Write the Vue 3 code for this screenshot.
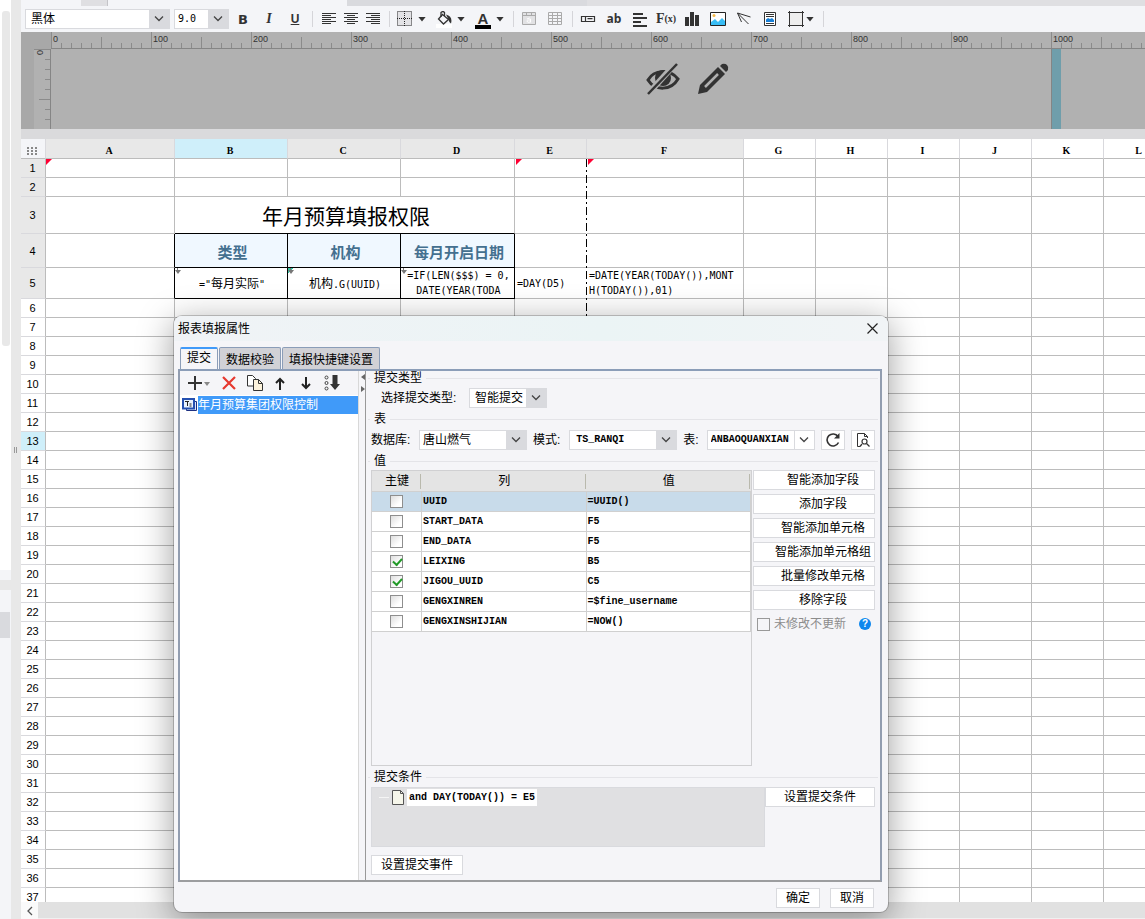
<script setup>
import { ref } from 'vue'

const font = ref('黑体')
const size = ref('9.0')
const submitType = ref('智能提交')
const database = ref('唐山燃气')
const schema = ref('TS_RANQI')
const tableName = ref('ANBAOQUANXIAN')
const keepUnmodified = ref(false)

const hTicks = Array.from({ length: 110 }, (_, i) => i)
const vTicks = Array.from({ length: 8 }, (_, i) => i)
const tickTop = (i) => (i % 10 === 0 ? 0 : i % 5 === 0 ? 5 : 11)

const columns = ['A', 'B', 'C', 'D', 'E', 'F', 'G', 'H', 'I', 'J', 'K', 'L']
const lastRows = Array.from({ length: 32 }, (_, i) => i + 6)

const fields = ref([
  { key: false, name: 'UUID', value: '=UUID()' },
  { key: false, name: 'START_DATA', value: 'F5' },
  { key: false, name: 'END_DATA', value: 'F5' },
  { key: true, name: 'LEIXING', value: 'B5' },
  { key: true, name: 'JIGOU_UUID', value: 'C5' },
  { key: false, name: 'GENGXINREN', value: '=$fine_username' },
  { key: false, name: 'GENGXINSHIJIAN', value: '=NOW()' },
])
const actions = ['智能添加字段', '添加字段', '智能添加单元格', '智能添加单元格组', '批量修改单元格', '移除字段']
</script>

<template>
  <div class="app">
    <aside class="side">
      <div class="side-list"><div class="side-thumb"></div></div>
      <div class="side-foot"></div>
      <div class="side-split"></div>
      <div class="side-gap"></div>
      <div class="side-item"></div>
      <div class="side-rest"></div>
    </aside>
    <div class="gutter"><i></i><i></i></div>

    <main class="main">
      <div class="topstrip"><span class="t1"></span><span class="t2"></span><span class="t3"></span><span class="t4"></span><span class="t5"></span></div>

      <div class="toolbar">
        <label class="combo font-combo">
          <select v-model="font" aria-label="字体"><option>黑体</option></select>
          <span class="arrow"><svg width="10" height="6" viewBox="0 0 10 6"><path d="M1 .5 5 4.5 9 .5" /></svg></span>
        </label>
        <label class="combo size-combo">
          <select v-model="size" aria-label="字号" class="mono"><option>9.0</option></select>
          <span class="arrow"><svg width="10" height="6" viewBox="0 0 10 6"><path d="M1 .5 5 4.5 9 .5" /></svg></span>
        </label>
        <div class="group">
          <button class="ic b">B</button>
          <button class="ic i">I</button>
          <button class="ic u">U</button>
        </div>
        <span class="sep"></span>
        <div class="group tight">
          <button class="ic" aria-label="左对齐"><svg width="16" height="14"><path class="ln" d="M2 1.500h14M2 3.500h9M2 5.500h14M2 7.500h9M2 9.500h14M2 11.500h9" /></svg></button>
          <button class="ic" aria-label="居中"><svg width="16" height="14"><path class="ln" d="M2 1.500h14M5 3.500h8M2 5.500h14M5 7.500h8M2 9.500h14M5 11.500h8" /></svg></button>
          <button class="ic" aria-label="右对齐"><svg width="16" height="14"><path class="ln" d="M2 1.500h14M7 3.500h9M2 5.500h14M7 7.500h9M2 9.500h14M7 11.500h9" /></svg></button>
        </div>
        <span class="sep"></span>
        <div class="group">
          <div class="drop">
            <button class="ic" aria-label="边框"><svg width="16" height="16"><path d="M.5.5h14v14H.5z" fill="#e3e3e6" stroke="#222" stroke-dasharray="1 1" /><path d="M7.500 0v15M0 7.500h15" stroke="#222" stroke-dasharray="1 1" /></svg></button>
            <button class="car" aria-label="更多边框"></button>
          </div>
          <div class="drop">
            <button class="ic" aria-label="填充"><svg width="17" height="17"><path fill="#fff" d="M0 13h17v4H0z" /><path d="m6.500 3.500 6 5-5 4.500-5-5z" fill="none" stroke="#333" stroke-width="1.300" /><path d="M5 6V1.500q2-2 3.500 0V5" fill="none" stroke="#333" stroke-width="1.300" /><path d="M10 3.500q7 2 5 9-2-1-2.500-4z" fill="#333" /></svg></button>
            <button class="car" aria-label="更多填充"></button>
          </div>
          <div class="drop">
            <button class="ic fc" aria-label="字体颜色"><span>A</span></button>
            <button class="car" aria-label="更多颜色"></button>
          </div>
        </div>
        <span class="sep"></span>
        <div class="group">
          <button class="ic" aria-label="合并"><svg width="16" height="14"><path d="M1.500.500h13v12h-13zM1 3.500h14M5.500 0v3M10.500 0v3" fill="#e2e2e4" stroke="#aaa" /><path d="M6 7q3-2 3.500 0v3.500M9.500 8q-4-.5-3.500 1.500 2 2 3.500 0" fill="none" stroke="#fff" /></svg></button>
          <button class="ic" aria-label="表格"><svg width="16" height="14"><path d="M1.500.500h13v12h-13zM1 3.500h14M1 6.500h14M1 9.500h14M5.500 0v13M10.500 0v13" fill="none" stroke="#aaa" /></svg></button>
        </div>
        <span class="sep"></span>
        <div class="group">
          <button class="ic" aria-label="控件"><svg width="16" height="8"><path d="M1.500 1.500h13v5h-13zM5.500 1v5M7.500 3.700h5" fill="none" stroke="#333" stroke-width="1.200" /></svg></button>
          <button class="ic ab">ab</button>
          <button class="ic" aria-label="段落"><svg width="16" height="15"><path d="M1 2h10M1 6h14M1 10h8M1 14h14" stroke="#333" stroke-width="2" /></svg></button>
          <button class="ic fx">F<small>(x)</small></button>
          <button class="ic" aria-label="图表"><svg width="16" height="14"><path d="M1 5h4v9H1zM6 0h4v14H6zM11 3h4v11h-4z" fill="#333" /></svg></button>
          <button class="ic" aria-label="图片"><svg width="16" height="14"><path d="M.5.500h15v13H.500z" fill="#fff" stroke="#222" /><path d="M1 13V10l4-3 3 3 4-4 3 3v4z" fill="#38bdf5" /><circle cx="4" cy="3.500" r="1.500" fill="#f5b947" /></svg></button>
          <button class="ic" aria-label="斜线"><svg width="16" height="14"><path d="m1.500 1 13 4M1.500 1l4 9M1.500 1l11 11" fill="none" stroke="#333" /></svg></button>
          <button class="ic" aria-label="子报表"><svg width="14" height="14"><path d="M1.500.500h11v13h-11z" fill="#fff" stroke="#333" /><path d="M3 2.500h8M3 4.500h8M3 11.500h8" stroke="#333" /><path d="M3 10V7.500l2-1.500 2 1 2-1 2 2v2z" fill="#187fd6" /></svg></button>
          <div class="drop near">
            <button class="ic" aria-label="形状"><svg width="16" height="16"><path d="M2 2h12v12H2z" fill="#eee" /><path d="M0 1.500h16M0 14.500h16M1.500 0v16M14.500 0v16" stroke="#333" /></svg></button>
            <button class="car" aria-label="更多形状"></button>
          </div>
        </div>
        <span class="sep"></span>
      </div>

      <div class="ruler">
        <div class="corner"></div>
        <svg class="hr" height="17">
          <g v-for="i in hTicks" :key="i">
            <path :d="`M${i * 10 + 0.5} ${tickTop(i)}V16`" stroke="#8b8b8b" />
            <text v-if="i % 10 === 0" :x="i * 10 + 2" y="10">{{ i * 10 }}</text>
          </g>
          <path d="M0 16.500H1600" stroke="#858585" />
        </svg>
        <svg class="vr" width="30" height="80">
          <path d="M0 0H13V80H0z" fill="#a8a8a8" />
          <path v-for="i in vTicks" :key="i" :d="`M${i === 0 ? 13 : i === 5 ? 18 : 24} ${i * 10 + 0.5}H29`" stroke="#8b8b8b" />
          <path d="M29.500 0V80" stroke="#858585" />
          <text x="-6" y="22" transform="rotate(-90)">0</text>
        </svg>
        <div class="page">
          <div class="page-in"></div>
          <div class="page-edge"></div>
          <div class="tools">
            <button aria-label="隐藏"><svg width="34" height="32" viewBox="0 0 34 32"><path d="M2 17C8 6 24 6 32 16C25 28 9 28 2 17z" fill="none" stroke="#333" stroke-width="3" /><circle cx="17" cy="15" r="8" fill="#333" /><path d="M29 1 2 31" stroke="#b1b1b1" stroke-width="6" /><path d="M31 1 2 31" stroke="#333" stroke-width="2.500" /></svg></button>
            <button aria-label="编辑"><svg width="32" height="32" viewBox="0 0 32 32"><path d="M1 31 3 22 21 4l7 7L10 29z" fill="#333" /><path d="M8 24 21 11" stroke="#b1b1b1" stroke-width="2.500" /><path d="m23 3 2-2q3-1 5 1t1 5l-2 2z" fill="#333" /></svg></button>
          </div>
        </div>
      </div>
      <div class="band"></div>

      <div class="sheet">
        <table class="grid">
          <colgroup>
            <col class="c0" /><col class="ca" /><col class="cb" /><col class="cb" /><col class="cd" /><col class="cs" /><col class="cf" />
            <col v-for="n in 6" :key="n" class="cs" />
          </colgroup>
          <thead>
            <tr class="h20">
              <th class="all"><svg width="10" height="8"><path d="M0 1h10M0 4h10M0 7h10" stroke="#888" stroke-width="2" stroke-dasharray="2 2" /></svg></th>
              <th v-for="(c, i) in columns" :key="c" :class="{ on: c === 'B', used: i < 6 }">{{ c }}</th>
            </tr>
          </thead>
          <tbody>
            <tr class="h19"><th class="used">1</th><td class="flag"></td><td></td><td></td><td></td><td class="flag in"></td><td class="flag in"></td><td v-for="n in 6" :key="n"></td></tr>
            <tr class="h19"><th class="used">2</th><td v-for="n in 12" :key="n"></td></tr>
            <tr class="h37"><th class="used">3</th><td></td><td colspan="3" class="title bb">年月预算填报权限</td><td v-for="n in 8" :key="n"></td></tr>
            <tr class="h34"><th class="used">4</th><td class="br"></td><td class="hd">类型</td><td class="hd">机构</td><td class="hd">每月开启日期</td><td v-for="n in 8" :key="n"></td></tr>
            <tr class="h31">
              <th class="used">5</th><td class="br"></td>
              <td class="bb br arr"><span class="mono">="</span>每月实际<span class="mono">"</span></td>
              <td class="bb br arr gr">机构<span class="mono">.G(UUID)</span></td>
              <td class="bb br arr mono two">=IF(LEN($$$) = 0,<br />DATE(YEAR(TODA</td>
              <td class="mono lt">=DAY(D5)</td>
              <td class="mono lt">=DATE(YEAR(TODAY()),MONT<br />H(TODAY()),01)</td>
              <td v-for="n in 6" :key="n"></td>
            </tr>
            <tr v-for="r in lastRows" :key="r" class="h19"><th :class="{ on: r === 13 }">{{ r }}</th><td v-for="n in 12" :key="n"></td></tr>
          </tbody>
        </table>
        <div class="pagebreak"></div>
      </div>
      <div class="hscroll"><button aria-label="向左滚动"><svg width="6" height="10"><path d="M5 1 1 5l4 4" fill="none" stroke="#555" stroke-width="1.300" /></svg></button><span></span></div>
    </main>

    <section class="dialog" role="dialog" aria-label="报表填报属性">
      <header>
        <h1>报表填报属性</h1>
        <button aria-label="关闭"><svg width="11" height="11"><path d="m.5.500 10 10M10.500.500l-10 10" stroke="#222" stroke-width="1.200" /></svg></button>
      </header>
      <nav><button class="active">提交</button><button>数据校验</button><button>填报快捷键设置</button></nav>

      <div class="panel">
        <div class="left">
          <div class="ltools">
            <button aria-label="添加"><svg width="22" height="14"><path d="M0 7h14M7 0v14" stroke="#333" stroke-width="2" /><path d="M16 6h6l-3 4z" fill="#888" /></svg></button>
            <button aria-label="删除"><svg width="14" height="14"><path d="m1 1 12 12M13 1 1 13" stroke="#e6392f" stroke-width="2.200" /></svg></button>
            <button aria-label="复制"><svg width="16" height="16"><path d="M.5.500h5l3 3v7.500h-8z" fill="#fff" stroke="#333" /><path d="M6.500 4.500h5l4 4v7h-9z" fill="#fdf3dc" stroke="#333" /><path d="M11.500 4.500v4h4" fill="none" stroke="#333" /></svg></button>
            <button aria-label="上移"><svg width="10" height="13"><path d="M5 13V2M1 6l4-4 4 4" fill="none" stroke="#222" stroke-width="2" /></svg></button>
            <button aria-label="下移"><svg width="10" height="13"><path d="M5 0v11M1 7l4 4 4-4" fill="none" stroke="#222" stroke-width="2" /></svg></button>
            <button aria-label="排序"><svg width="16" height="16"><g fill="none" stroke="#444"><circle cx="2.500" cy="2.500" r="1.500" /><circle cx="2.500" cy="8" r="1.500" /><circle cx="2.500" cy="13.500" r="1.500" /></g><path d="M8.500 0h5v9H16l-5 6-5-6h2.500z" fill="#333" /></svg></button>
          </div>
          <div class="list">
            <div class="item">
              <svg width="16" height="14"><path d="M4.500 3.500h10v9h-10z" fill="#dce8f8" stroke="#1d2f80" /><path d="M1 1h11v9.500H1z" fill="#e8f2ff" stroke="#2450b0" stroke-width="2" /><path d="M3 3.500h4M5.500 4v4M7.500 6h2M7.500 8h2" stroke="#222" /></svg>
              <span>年月预算集团权限控制</span>
            </div>
          </div>
        </div>
        <div class="splitter"><svg width="4" height="18"><path d="M4 0v6L0 3zM0 12v6l4-3z" fill="#666" /></svg></div>

        <div class="right">
          <h2 class="first">提交类型</h2>
          <div class="row type">
            <label for="st">选择提交类型:</label>
            <span class="combo type-combo">
              <select id="st" v-model="submitType"><option>智能提交</option></select>
              <span class="arrow"><svg width="10" height="6" viewBox="0 0 10 6"><path d="M1 .5 5 4.5 9 .5" /></svg></span>
            </span>
          </div>
          <h2>表</h2>
          <div class="row db">
            <label for="db">数据库:</label>
            <span class="combo db-combo">
              <select id="db" v-model="database"><option>唐山燃气</option></select>
              <span class="arrow"><svg width="10" height="6" viewBox="0 0 10 6"><path d="M1 .5 5 4.5 9 .5" /></svg></span>
            </span>
            <label for="sc">模式:</label>
            <span class="combo db-combo sch">
              <select id="sc" v-model="schema" class="mono ser"><option>TS_RANQI</option></select>
              <span class="arrow"><svg width="10" height="6" viewBox="0 0 10 6"><path d="M1 .5 5 4.5 9 .5" /></svg></span>
            </span>
            <label for="tb">表:</label>
            <span class="combo db-combo plain">
              <input id="tb" v-model="tableName" class="mono ser" type="text" />
              <span class="arrow"><svg width="10" height="6" viewBox="0 0 10 6"><path d="M1 .5 5 4.5 9 .5" /></svg></span>
            </span>
            <button class="btn sq" aria-label="刷新"><svg width="14" height="14"><path d="M12 3.500A6 6 0 1 0 12.500 9.500" fill="none" stroke="#333" stroke-width="1.600" /><path d="M13.500 0v5.500H8z" fill="#333" /></svg></button>
            <button class="btn sq" aria-label="预览"><svg width="14" height="14"><path d="M4 13.500H1.500V.500h7l3 3V5M8.500.500v3h3" fill="none" stroke="#333" /><circle cx="8.500" cy="8.500" r="2.500" fill="none" stroke="#333" stroke-width="1.200" /><path d="m10.500 10.500 3 3M6 11l-2 2.500" stroke="#333" stroke-width="1.300" /></svg></button>
          </div>
          <h2 class="val">值</h2>
          <div class="values">
            <div class="vbox">
              <table class="vt">
                <colgroup><col class="k" /><col /><col /></colgroup>
                <thead><tr><th>主键</th><th>列</th><th>值</th></tr></thead>
                <tbody>
                  <tr v-for="(f, i) in fields" :key="f.name" :class="{ sel: i === 0 }">
                    <td class="kc"><input v-model="f.key" type="checkbox" :aria-label="f.name" /></td>
                    <td class="mono ser">{{ f.name }}</td>
                    <td class="mono ser">{{ f.value }}</td>
                  </tr>
                </tbody>
              </table>
            </div>
            <div class="acts">
              <button v-for="a in actions" :key="a" class="btn">{{ a }}</button>
              <div class="keep">
                <label><input v-model="keepUnmodified" type="checkbox" /><span>未修改不更新</span></label>
                <button class="help" aria-label="帮助">?</button>
              </div>
            </div>
          </div>
          <h2 class="cond">提交条件</h2>
          <div class="condrow">
            <div class="tree">
              <i></i>
              <svg width="12" height="15"><path d="M.500.500h8l3 3v11H.500z" fill="#f6f6ea" stroke="#555" /><path d="M8.500.500v3h3" fill="none" stroke="#555" /></svg>
              <span class="mono ser">and DAY(TODAY()) = E5</span>
            </div>
            <button class="btn">设置提交条件</button>
          </div>
          <button class="btn event">设置提交事件</button>
        </div>
      </div>
      <footer><button class="btn">确定</button><button class="btn">取消</button></footer>
    </section>
  </div>
</template>

<style>
html, body { height: 100%; margin: 0; overflow: hidden; }
</style>

<style scoped>
.app { position: relative; display: flex; height: 100vh; overflow: hidden; background: #f4f5f8; color: #000; font: 12px/14px "Liberation Sans", "Noto Sans CJK SC", sans-serif; }
.app * { box-sizing: border-box; }
button, select, input { font: inherit; color: inherit; margin: 0; padding: 0; }
button { border: 0; background: none; }
svg { display: block; }
.mono { font-family: "DejaVu Sans Mono", "Noto Sans CJK SC", monospace; font-size: 10px; }
.ser { font-family: "Liberation Mono", "Noto Sans CJK SC", monospace; font-weight: bold; }

.side { flex: none; width: 11px; display: flex; flex-direction: column; }
.side-list { height: 570px; background: #fff; padding: 11px 1px 0 2px; }
.side-thumb { height: 335px; background: #e8e8e8; border-radius: 3px; }
.side-foot { height: 10px; background: #f4f5f8; }
.side-split { height: 10px; background: #e8e8e8; }
.side-gap { height: 22px; }
.side-item { height: 26px; margin-right: 1px; background: #d9dade; }
.side-rest { flex: 1; }
.gutter { flex: none; width: 10px; display: flex; gap: 1px; padding: 447px 0 0 3px; background: #e8e8e8; }
.gutter i { width: 1px; height: 6px; background: #999; }

.main { flex: 1; min-width: 0; display: flex; flex-direction: column; }
.topstrip { flex: none; display: flex; height: 6px; }
.t1 { width: 60px; }
.t2 { width: 27px; background: #dfdfe2; border-right: 1px solid #c4c4c8; }
.t3 { width: 239px; }
.t4 { width: 240px; background: #d9dade; }
.t5 { flex: 1; background: #dfdfe2; }
.toolbar { flex: none; display: flex; align-items: center; height: 26px; padding-left: 4px; }
.combo { display: inline-grid; grid-template-columns: 1fr 20px; height: 20px; border: 1px solid #d9dade; background: #fff; }
.combo select, .combo input { grid-area: 1 / 1 / 2 / 3; width: 100%; min-width: 0; height: 18px; border: 0; outline: 0; background: transparent; appearance: none; padding-left: 5px; line-height: 18px; }
.combo input { grid-area: 1 / 1 / 2 / 2; }
.arrow { grid-area: 1 / 2 / 2 / 3; display: flex; align-items: center; justify-content: center; background: #d9dade; pointer-events: none; }
.arrow path { fill: none; stroke: #444; stroke-width: 1.3; }
.combo.plain .arrow { background: #fff; border-left: 1px solid #d9dade; }
.font-combo { width: 145px; margin-right: 4px; }
.size-combo { width: 55px; margin-right: 6px; }
.size-combo select { padding-left: 3px; }
.group { display: flex; align-items: center; gap: 10px; }
.group.tight { gap: 6px; }
.drop { display: flex; align-items: center; gap: 5px; }
.drop.near { gap: 2px; }
.ic { display: flex; align-items: center; justify-content: center; width: 16px; height: 20px; color: #333; }
.ic.b { font: bold 13px "DejaVu Sans", sans-serif; }
.ic.i { font: italic bold 14px "Liberation Serif", serif; }
.ic.u { font-weight: bold; text-decoration: underline; }
.ic.fc { align-items: flex-end; }
.ic.fc span { border-bottom: 4px solid #000; width: 16px; font: bold 15px/13px "Liberation Sans", sans-serif; }
.ic.ab { font: bold 12px/16px "Open Sans", sans-serif; }
.ic.fx { font: bold 14px/16px "Liberation Serif", serif; }
.ic.fx small { font-size: 10px; }
.ln { stroke: #333; }
.car { width: 8px; height: 5px; background: #333; clip-path: polygon(0 0, 100% 0, 50% 100%); }
.sep { flex: none; width: 1px; height: 16px; margin: 0 7px 0 9px; background: #d5d5d9; }

.ruler { flex: none; display: grid; grid-template-columns: 30px minmax(0, 1fr); grid-template-rows: 17px 80px; background: #b1b1b1; overflow: hidden; }
.corner { background: #a8a8a8; }
.hr { width: 100%; }
.ruler text { font: 9px "Liberation Sans", sans-serif; fill: #333; }
.page { position: relative; display: flex; }
.page-in { width: 1001px; border-right: 1px solid #858585; }
.page-edge { width: 9px; background: #6f9eab; }
.tools { position: absolute; top: 14px; left: 595px; display: flex; gap: 17px; }
.band { flex: none; height: 10px; background: #dadadc; }

.sheet { position: relative; flex: 1; min-height: 0; overflow: hidden; background: #fff; }
.grid { table-layout: fixed; width: 1155px; border-collapse: separate; border-spacing: 0; }
.c0 { width: 25px; } .ca { width: 129px; } .cb { width: 113px; } .cd { width: 114px; } .cs { width: 72px; } .cf { width: 157px; }
.grid th, .grid td { padding: 0; border-right: 1px solid #bcbcbc; border-bottom: 1px solid #bcbcbc; text-align: center; vertical-align: middle; overflow: hidden; white-space: nowrap; }
.grid thead th { font: bold 10px/14px "Liberation Serif", serif; border-right-color: #d9d9dd; padding: 4px 2px 0 0; }
.grid tbody th { font: 11px/14px "Liberation Sans", sans-serif; border-bottom-color: #d9d9dd; padding: 0 1px 0 0; }
.grid th.used { background: #e8e8e8; }
.grid th.on { background: #cfeffa; }
.grid th.all { background: #f4f5f8; }
.grid th.all svg { margin: 0 6px; }
.h20 { height: 20px; } .h19 { height: 19px; } .h37 { height: 37px; } .h34 { height: 34px; } .h31 { height: 31px; }
.grid .br { border-right-color: #000; }
.grid .bb { border-bottom-color: #000; }
.grid .title { font-size: 21px; line-height: 30px; padding: 3px 0 0 3px; }
.grid .hd { background: #f0f8ff; border-color: #000; color: #44708f; font-size: 15px; font-weight: bold; line-height: 20px; padding: 4px 0 0 3px; }
.grid .bb.arr { padding: 2px 0 0 2px; }
.grid .bb.arr.two { padding: 0 0 0 2px; }
.grid td.mono { line-height: 15px; }
.grid .lt { text-align: left; padding: 0 0 0 2px; }
.flag, .arr { position: relative; }
.flag::before { content: ""; position: absolute; left: 0; top: 0; border-top: 6px solid #ff0033; border-right: 6px solid transparent; }
.flag.in::before { left: 1px; }
.arr::before { content: ""; position: absolute; left: 0; top: 2px; border-top: 4px solid #777; border-left: 3px solid transparent; border-right: 3px solid transparent; }
.arr::after { content: ""; position: absolute; left: 2px; top: 0; width: 1px; height: 4px; background: #777; }
.gr { background: linear-gradient(135deg, #34c3a0 4px, transparent 4px); }
.pagebreak { position: absolute; left: 565px; top: 20px; bottom: 0; width: 1px; background: repeating-linear-gradient(#000 0 8px, #fff 8px 11px, #000 11px 13px, #fff 13px 16px); }
.hscroll { flex: none; display: flex; height: 17px; background: #f0f0f0; }
.hscroll button { width: 17px; display: flex; align-items: center; justify-content: center; background: #fafafa; }
.hscroll span { flex: 1; height: 16px; background: #e1e1e1; }

.dialog { position: absolute; left: 174px; top: 316px; width: 714px; display: flex; flex-direction: column; background: #f5f5f8; border-radius: 8px; box-shadow: 0 0 0 1px rgba(0, 0, 0, .2), 0 8px 34px 2px rgba(0, 0, 0, .36); }
.dialog header { display: flex; justify-content: space-between; align-items: center; height: 25px; padding: 0 10px 0 4px; background: linear-gradient(90deg, #f0f3f6, #ebf4f5 60%, #f1f4f6); border-radius: 8px 8px 0 0; }
h1, h2 { margin: 0; font: inherit; }
nav { display: flex; gap: 1px; align-items: flex-end; height: 28px; padding-left: 6px; }
nav button { height: 22px; padding: 2px 6px 0; border: 1px solid #8b9db8; border-bottom: 0; border-radius: 2px 2px 0 0; background: #d1d1d6; }
nav .active { padding-bottom: 3px; padding-top: 0; border-top: 2px solid #409af9; background: #f5f5f8; }
.panel { display: flex; margin: 0 6px 0 4px; border: 2px solid #929db0; border-top-color: #8b9db8; border-bottom-color: #9c9d9f; }
.left { flex: none; width: 179px; display: flex; flex-direction: column; border-right: 1px solid #d8d8d8; }
.ltools { display: flex; align-items: center; height: 24px; padding-left: 8px; }
.ltools button { margin-right: 12px; }
.ltools button:nth-child(2) { margin-right: 11px; }
.ltools button:nth-child(4) { margin-right: 16px; }
.ltools button:nth-child(5) { margin-right: 13px; }
.list { flex: 1; background: #fff; }
.item { display: flex; align-items: center; height: 20px; padding-left: 2px; }
.item span { flex: 1; height: 18px; line-height: 18px; background: #409af9; color: #fff; }
.splitter { flex: none; width: 7px; padding: 3px 0 0 2px; border-right: 1px solid #999; }
.right { flex: 1; min-width: 0; display: flex; flex-direction: column; align-items: stretch; padding: 0 2px 5px 2px; height: 509px; }
h2 { display: flex; align-items: center; gap: 4px; height: 14px; margin: 4px 0; white-space: nowrap; }
h2::before { content: ""; width: 2px; height: 1px; background: #e4e4e8; }
h2::after { content: ""; flex: 1; height: 1px; background: #e4e4e8; }
h2.first { margin: 0 0 3px; }
h2.val { margin: 4px 0 2px; }
.row { display: flex; align-items: center; height: 20px; white-space: nowrap; }
.type { padding-left: 13px; }
.type label { width: 88px; }
.type-combo { width: 78px; }
.db { padding-left: 3px; }
.db label:first-child { width: 48px; }
.db-combo { width: 108px; margin-right: 6px; }
.db-combo select { padding-left: 3px; }
.db-combo select.mono { padding-left: 6px; }
.db-combo input { padding-left: 3px; }
.sch { margin-left: 9px; }
.plain { margin-left: 8px; }
.btn { height: 20px; border: 1px solid #d9dade; background: #fff; white-space: nowrap; line-height: 18px; }
.sq { width: 24px; display: flex; align-items: center; justify-content: center; }
.sq + .sq { margin-left: 6px; }
.values { flex: 1; min-height: 0; display: flex; margin: 0 3px; }
.vbox { flex: 1; border: 1px solid #d0d0d2; }
.vt { width: 100%; table-layout: fixed; border-collapse: separate; border-spacing: 0; background: #fff; }
.vt .k { width: 50px; }
.vt th { height: 21px; padding: 0; font-weight: normal; background: #e4e4e4; border-bottom: 1px solid #d0d0d0; background-image: linear-gradient(#b9b9ad, #b9b9ad); background-size: 1px 15px; background-position: right 1px center; background-repeat: no-repeat; }
.vt td { height: 20px; padding: 0 0 0 1px; border-right: 1px solid #d0d0d0; border-bottom: 1px solid #d0d0d0; line-height: 16px; }
.sel td { background: #c8dbea; }
.vt .kc { padding: 0; }
.vt input { display: block; margin: 0 auto; width: 13px; height: 13px; appearance: none; border: 1px solid #8e8e8e; background: linear-gradient(135deg, #dedede, #fff 70%); }
.vt input:checked::after { content: ""; display: block; width: 7px; height: 4px; margin: 2px 0 0 2px; border-left: 2px solid #229a28; border-bottom: 2px solid #229a28; transform: rotate(-48deg); }
.acts { flex: none; width: 123px; display: flex; flex-direction: column; gap: 4px; padding-left: 1px; }
.acts .btn { padding-left: 18px; }
.keep { display: flex; align-items: center; height: 20px; padding: 0 4px 0 4px; color: #8c8c8c; }
.keep label { flex: 1; display: flex; align-items: center; gap: 4px; }
.keep input { width: 13px; height: 13px; appearance: none; border: 1px solid #999; }
.help { width: 12px; height: 12px; border-radius: 6px; background: #0d87ee; color: #fff; font: bold 10px/12px "Liberation Sans", sans-serif; text-align: center; }
h2.cond { margin: 4px 0 3px; }
.condrow { display: flex; align-items: flex-start; margin: 0 3px; }
.tree { flex: 1; display: flex; align-items: flex-start; height: 60px; padding: 1px 6px; background: #e0e0e2; border: 1px solid #d9dade; }
.tree i { width: 10px; height: 1px; margin: 8px 3px 0 1px; background: #f5f5f5; }
.tree svg { margin-top: 1px; }
.tree span { margin-left: 3px; padding: 0 2px; background: #fff; line-height: 17px; height: 17px; }
.condrow .btn { width: 110px; }
.event { align-self: flex-start; width: 92px; margin: 8px 3px 0; }
footer { display: flex; justify-content: flex-end; gap: 10px; padding: 6px 14px 4px 0; }
footer .btn { width: 44px; }
</style>
